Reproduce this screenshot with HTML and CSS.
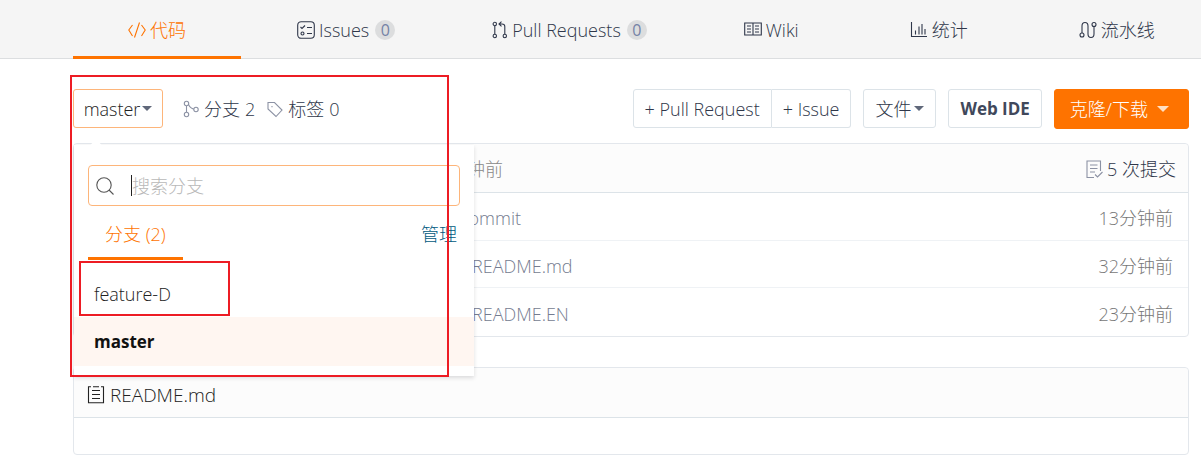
FILE: index.html
```html
<!DOCTYPE html>
<html lang="zh-CN">
<head>
<meta charset="utf-8">
<title>代码</title>
<link rel="stylesheet" href="styles.css">
</head>
<body>
<nav class="tabs">
  <a class="tab active" href="#code">
    <svg class="icon" viewBox="0 0 18 18"><path d="M4.5 4 .8 9l3.7 6M13.500 4l3.700 5-3.700 6M11.500 1.500 6.500 16.500"/></svg>
    <span class="zh">代码</span></a>
  <a class="tab counted" href="#issues">
    <svg class="icon" viewBox="0 0 18 18"><rect x=".7" y=".7" width="16.600" height="16.600" rx="3.500"/><path d="m3.500 6 1.500 1.500 3-3M10 6.500h5M10 12.500h5"/><circle cx="5.500" cy="12.500" r="1.500"/></svg>
    <span>Issues</span><span class="badge">0</span></a>
  <a class="tab counted" href="#pulls">
    <svg class="icon narrow" viewBox="0 0 16 18"><circle cx="2.800" cy="3" r="1.700"/><circle cx="2.800" cy="15" r="1.700"/><circle cx="12.800" cy="15" r="1.700"/><path d="M2.800 5v8M12.800 13V5.500Q12.800 3 10 3H7M9.500.7 7 3l2.500 2.300"/></svg>
    <span>Pull Requests</span><span class="badge">0</span></a>
  <a class="tab" href="#wiki">
    <svg class="icon" viewBox="0 0 18 18"><path d="M.7 2h16.600v12H.7zM9 2v12M3 5h4M3 8h4M3 11h4M11 5h4M11 8h4M11 11h4"/></svg>
    <span>Wiki</span></a>
  <a class="tab" href="#stats">
    <svg class="icon" viewBox="0 0 18 18"><path d="M1.500 1v14.500h15.500M5.500 9.500v4M9 5.500v8M12 3v10.500M15 8v5.500"/></svg>
    <span class="zh">统计</span></a>
  <a class="tab" href="#pipeline">
    <svg class="icon" viewBox="0 0 18 18"><circle cx="3" cy="14" r="2"/><circle cx="15" cy="3.500" r="2"/><path d="M3 12V5Q3 1.500 6 1.500T9 5v8q0 3.500 3 3.500t3-3.500V5.500"/></svg>
    <span class="zh">流水线</span></a>
</nav>

<main class="page">
  <div class="toolbar">
    <div class="branch">
      <button class="btn branch-btn" type="button">master <i class="caret"></i></button>
      <section class="menu" aria-label="切换分支">
        <i class="menu-notch"></i>
        <label class="search">
          <svg class="icon search-icon" viewBox="0 0 18 18"><circle cx="8" cy="8" r="7.200"/><path d="m13 13 4.500 4.500"/></svg>
          <i class="text-caret"></i>
          <input type="text" placeholder="搜索分支" aria-label="搜索分支">
        </label>
        <div class="menu-tabs">
          <a class="menu-tab zh" href="#branches">分支 (2)</a>
          <a class="manage zh" href="#manage">管理</a>
        </div>
        <a class="item" href="#feature-D">feature-D</a>
        <a class="item selected" href="#master">master</a>
      </section>
      <i class="mark mark-menu"></i>
      <i class="mark mark-item"></i>
    </div>
    <a class="stat branches" href="#branches">
      <svg class="icon narrow muted" viewBox="0 0 16 18"><circle cx="3.500" cy="3.500" r="2.200"/><circle cx="3.500" cy="14.500" r="2.200"/><circle cx="13" cy="9.500" r="2.200"/><path d="M3.500 6v6M5.500 4.500q2 4 5.300 4.600"/></svg>
      <span class="zh">分支</span> 2</a>
    <a class="stat" href="#tags">
      <svg class="icon narrow muted" viewBox="0 0 16 18"><path d="M1 2.500h6.500l7.500 7.500-6 6.500-8-7.500zM5 6v1.200"/></svg>
      <span class="zh">标签</span> 0</a>
    <div class="actions">
      <div class="group">
        <button class="btn" type="button">+ Pull Request</button>
        <button class="btn" type="button">+ Issue</button>
      </div>
      <button class="btn zh files" type="button">文件<i class="caret"></i></button>
      <button class="btn strong" type="button">Web IDE</button>
      <button class="btn primary zh" type="button">克隆/下载 <i class="caret"></i></button>
    </div>
  </div>

  <section class="card commits">
    <header class="card-head">
      <span class="zh when">分钟前</span>
      <a class="total" href="#commits"><svg class="icon muted" viewBox="0 0 18 18"><path d="M15.500 11V1H2v16.500h7M5 5h7.500M5 8.500h7.500M5 12h5M10 14.500l2.500 2.500 5-5"/></svg><span>5 <span class="zh">次提交</span></span></a>
    </header>
    <table class="files-table">
      <tr><td class="message first">commit</td><td class="time zh">13分钟前</td></tr>
      <tr><td class="message">README.md</td><td class="time zh">32分钟前</td></tr>
      <tr><td class="message">README.EN</td><td class="time zh">23分钟前</td></tr>
    </table>
  </section>

  <section class="card readme">
    <header class="card-head readme-head">
      <svg class="icon" viewBox="0 0 18 18"><path d="M4 .7H1.500v16h15V.7H14M6 .7h6M5 4.500h8M5 8.500h8M5 12.500h8"/></svg>
      <span>README.md</span>
    </header>
    <div class="readme-body"></div>
  </section>
</main>
</body>
</html>
```
FILE: styles.css
```css
* { box-sizing: border-box; }
body {
  margin: 0;
  overflow-x: hidden;
  background: #fff;
  color: #2f374a;
  font: 300 18px/24px "Open Sans", "Noto Sans CJK SC", sans-serif;
}
a { color: inherit; text-decoration: none; }
.zh { font-size: 18px; }

.icon {
  width: 18px;
  height: 18px;
  flex: none;
  fill: none;
  stroke: currentColor;
  stroke-width: 1.1;
}
.narrow { width: 16px; }
.muted { color: #8c92a4; }

.tabs {
  display: flex;
  gap: 1px;
  height: 59px;
  padding-left: 73px;
  background: #f5f5f5;
  border-bottom: 1px solid #dcdee0;
}
.tab {
  display: flex;
  flex: none;
  align-items: center;
  gap: 4px;
  height: 59px;
  padding: 0 55px;
  white-space: nowrap;
}
.tab.counted { padding-right: 41px; }
.tab.active { color: #fe7300; border-bottom: 3px solid #fe7300; padding-top: 3px; }
.badge {
  min-width: 20px;
  height: 20px;
  margin-left: 2px;
  border-radius: 10px;
  background: #dcddde;
  color: #7482a6;
  font-size: 16px;
  font-weight: 400;
  line-height: 20px;
  text-align: center;
}

.page { padding: 30px 12px 12px 73px; }
.toolbar { display: flex; align-items: flex-start; height: 40px; margin-bottom: 14px; }
.branch { position: relative; }
.btn {
  display: inline-flex;
  align-items: center;
  justify-content: center;
  height: 39px;
  padding: 0 11px;
  background: #fff;
  border: 1px solid #dce3e8;
  border-radius: 3px;
  color: #2f374a;
  font: inherit;
  white-space: nowrap;
}
.branch-btn { width: 90px; padding: 0; gap: 2px; border-color: #fdb57a; color: #222; }
.caret { border: 5px solid transparent; border-top-color: #60687a; border-bottom: 0; }
.stat { display: flex; align-items: center; gap: 5px; height: 39px; margin-left: 12px; white-space: nowrap; }
.stat.branches { margin-left: 20px; }
.actions { display: flex; gap: 12px; margin-left: auto; }
.group { display: flex; }
.group .btn:first-child { border-radius: 3px 0 0 3px; }
.group .btn:last-child { border-left: 0; border-radius: 0 3px 3px 0; }
.btn.files { gap: 3px; }
.btn.strong { font-size: 17px; font-weight: 700; color: #40485b; }
.btn.primary { height: 40px; padding: 0 19px 0 15px; gap: 9px; background: #fe7300; border-color: #fe7300; color: #fff; }
.primary .caret { border-width: 6px 6px 0; border-top-color: #ffe0c4; }

.menu {
  position: absolute;
  z-index: 1;
  top: 56px;
  left: 1px;
  width: 400px;
  height: 231px;
  padding-top: 20px;
  background: #fff;
  box-shadow: 0 2px 4px rgba(34, 36, 38, .15);
}
.menu-notch { position: absolute; top: -4px; left: 18px; width: 8px; height: 8px; background: #fff; transform: rotate(45deg); }
.search {
  display: flex;
  align-items: center;
  height: 41px;
  margin: 0 14px;
  padding-left: 7px;
  border: 1px solid #fdb57a;
  border-radius: 4px;
}
.search-icon { color: #555; }
.text-caret { width: 1px; height: 21px; margin-left: 17px; background: #222; }
.search input {
  flex: 1;
  min-width: 0;
  padding: 0;
  border: 0;
  outline: 0;
  background: none;
  font: inherit;
}
.search input::placeholder { color: #b8b8b8; opacity: 1; }
.menu-tabs { display: flex; justify-content: space-between; height: 54px; margin: 0 17px 9px 14px; }
.menu-tab { padding: 16px 17px 0; color: #fe7300; border-bottom: 3px solid #fe7300; }
.manage { padding-top: 16px; color: #005980; }
.item { display: block; height: 48px; padding-left: 20px; color: #222; line-height: 50px; }
.selected { height: 49px; background: #fff6f1; color: #111; font-size: 17px; font-weight: 700; }
.mark { position: absolute; z-index: 2; border: 2px solid #ed1c24; pointer-events: none; }
.mark-menu { top: -14px; left: -3px; width: 379px; height: 302px; }
.mark-item { top: 172px; left: 6px; width: 151px; height: 55px; }

.card { border: 1px solid #e3e7ec; border-radius: 4px; background: #fff; }
.card-head {
  display: flex;
  align-items: center;
  height: 49px;
  padding: 2px 12px 0 13px;
  background: #fcfcfc;
  border-bottom: 1px solid #dce3e8;
  border-radius: 4px 4px 0 0;
}
.when { padding-left: 362px; color: #888; }
.total { display: flex; align-items: center; gap: 4px; margin-left: auto; }
.files-table { width: 100%; border-spacing: 0; }
.files-table td { height: 47px; padding: 3px 15px 0 0; border-bottom: 1px solid #eff2f5; }
.files-table tr:first-child td { height: 48px; }
.files-table tr:last-child td { height: 48px; border-bottom: 0; }
.message { color: #757c90; }
.files-table .message { padding-left: 398px; }
.files-table .first { padding-left: 386px; }
.time { color: #777; text-align: right; }
.readme { margin-top: 30px; }
.readme-head { height: 50px; gap: 5px; padding-top: 4px; color: #222; font-size: 19px; }
.readme-body { height: 36px; }
```
